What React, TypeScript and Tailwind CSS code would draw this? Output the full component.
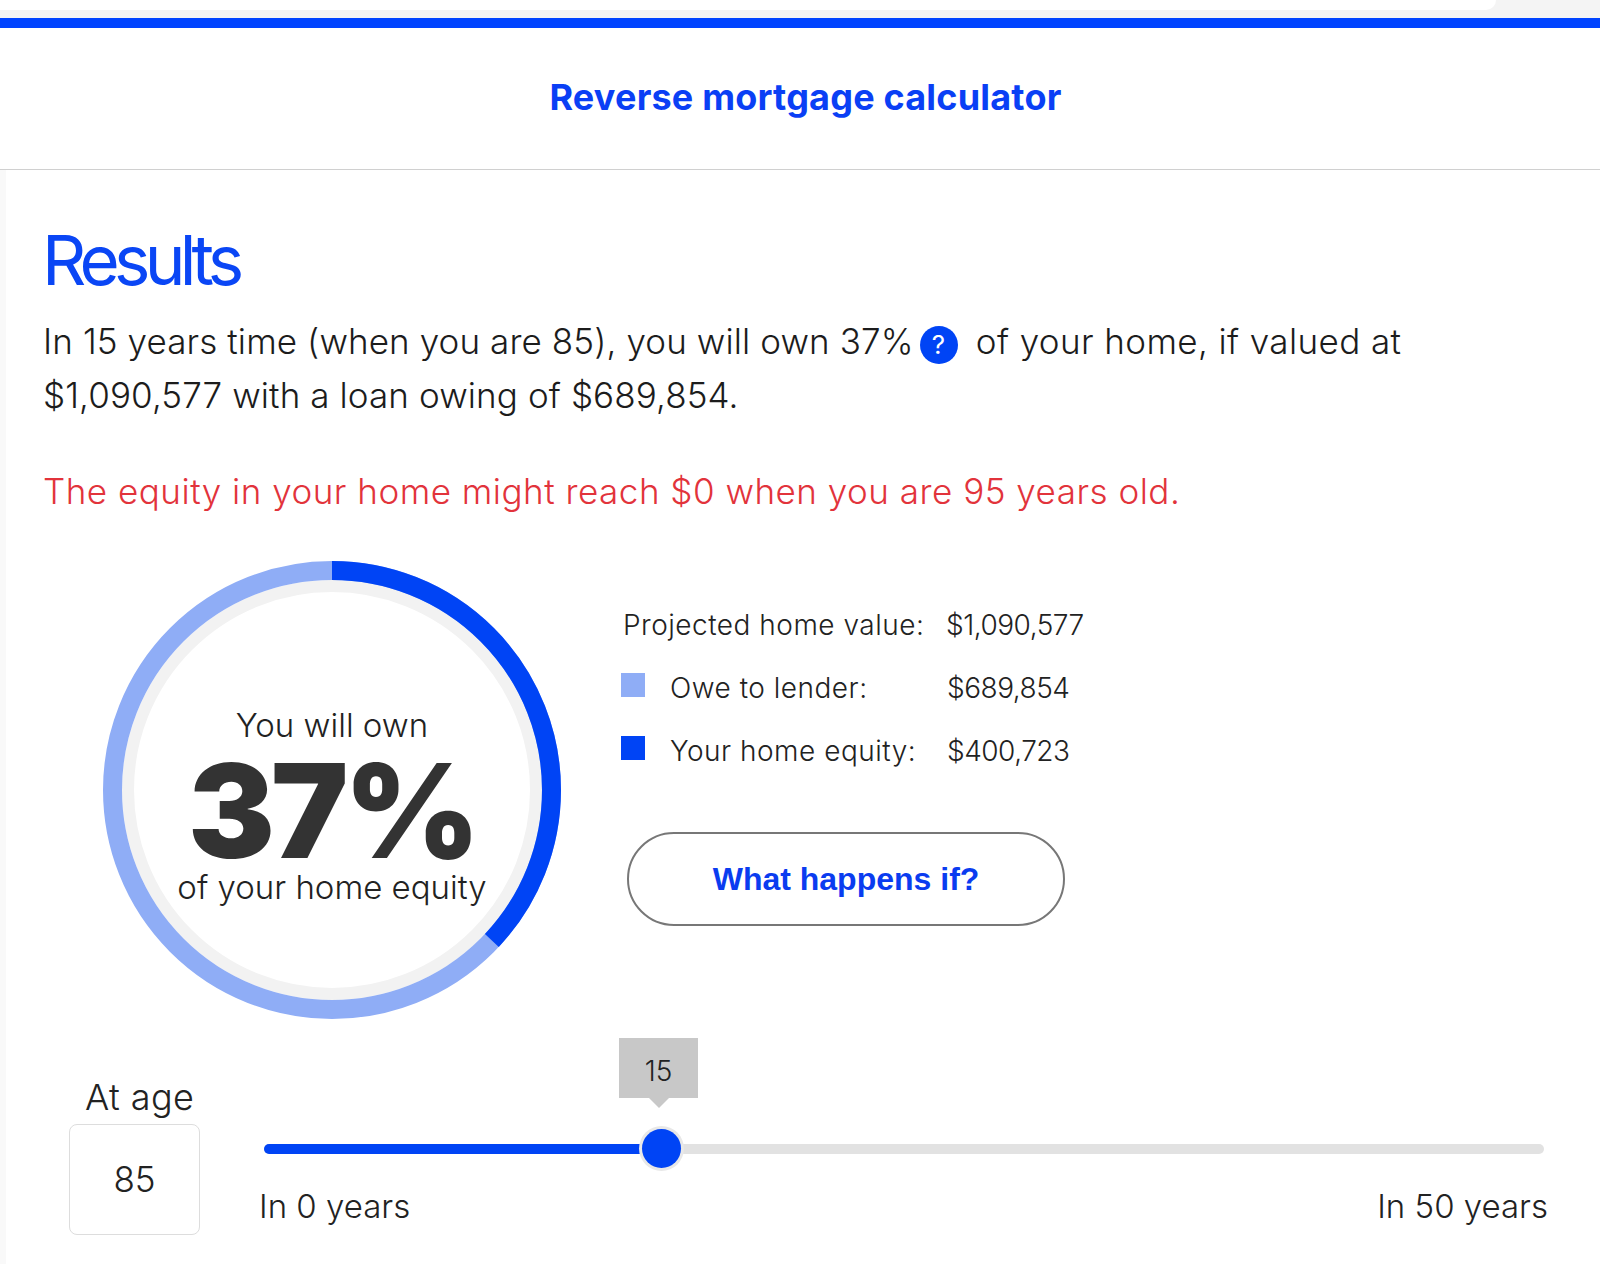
const sans = "font-['Inter','Liberation_Sans',sans-serif]";

function Donut() {
  // 37% equity arc, r is the middle of the 19px stroke
  const r = 219.5;
  const c = 2 * Math.PI * r;
  return (
    <svg width="458" height="458" viewBox="0 0 458 458" className="absolute inset-0" aria-hidden>
      <circle cx="229" cy="229" r="204" fill="none" stroke="#f2f2f2" strokeWidth="12" />
      <circle cx="229" cy="229" r={r} fill="none" stroke="#8fadf6" strokeWidth="19" />
      <circle
        cx="229"
        cy="229"
        r={r}
        fill="none"
        stroke="#0044f5"
        strokeWidth="19"
        strokeDasharray={`${c * 0.37} ${c}`}
        transform="rotate(-90 229 229)"
      />
    </svg>
  );
}

function LegendRow({ swatch, label, value }: { swatch: string; label: string; value: string }) {
  return (
    <div className="flex h-[63px] items-center">
      <span className={`mb-[5px] h-6 w-6 ${swatch}`} />
      <span className="ml-[25px] w-[277px] text-[28px] font-light tracking-[0.5px] text-[#222]">{label}</span>
      <span className="text-[28px] font-light tracking-[-0.5px] text-[#222]">{value}</span>
    </div>
  );
}

export default function App() {
  return (
    <div className={`min-h-[1264px] w-[1600px] overflow-hidden bg-white ${sans}`}>
      <div className="h-[18px] bg-[#f4f4f4]">
        <div className="h-[10px] w-[1496px] rounded-br-[16px] bg-white" />
      </div>
      <div className="h-[10px] bg-[#0044ff]" />
      <header className="flex h-[142px] items-center justify-center border-b border-[#d0d0d0] pb-[4px] pl-[11px]">
        <h2 className="text-[36px] font-bold tracking-[0.2px] text-[#0a3ff5]">Reverse mortgage calculator</h2>
      </header>

      <main className="min-h-[1094px] border-l-[6px] border-[#f9f9f9] pt-[48px] pl-[37px]">
        <h1 className="-ml-[1px] text-[69px] leading-[84px] font-normal tracking-[-5.8px] text-[#0a46f5]">Results</h1>
        <p className="mt-[12px] w-[1500px] text-[35px] leading-[54px] font-light tracking-[0.1px] text-[#1c1c1c]">
          In 15 years time (when you are 85), you will own 37%
          <span className="mr-[8px] ml-[6px] inline-flex h-[38px] w-[38px] items-center justify-center rounded-full bg-[#0044f5] text-[26px] font-normal text-white">
            ?
          </span>
          <span className="tracking-[0.4px]"> of your home, if valued at</span>
          <br />
          $1,090,577 with a loan owing of $689,854.
        </p>
        <p className="mt-[42px] text-[35px] leading-[54px] font-light tracking-[0.5px] text-[#e2333b]">
          The equity in your home might reach $0 when you are 95 years old.
        </p>

        <div className="mt-[43px] flex">
          <div className="relative ml-[60px] h-[458px] w-[458px]">
            <Donut />
            <div className="absolute inset-0 flex flex-col items-center text-[#222]">
              <span className="mt-[144px] text-[33px] leading-10 font-light">You will own</span>
              <span className="mt-[7px] text-[130px] leading-[118px] font-black tracking-[-4px] text-[#333]">37%</span>
              <span className="mt-[-3px] text-[33px] leading-10 font-light">of your home equity</span>
            </div>
          </div>
          <div className="ml-[60px]">
            <div className="mt-[32px] flex h-[63px] items-center">
              <span className="w-[325px] pl-[2px] text-[28px] font-light tracking-[0.5px] text-[#222]">Projected home value:</span>
              <span className="text-[28px] font-light tracking-[-0.5px] text-[#222]">$1,090,577</span>
            </div>
            <LegendRow swatch="bg-[#8fadf6]" label="Owe to lender:" value="$689,854" />
            <LegendRow swatch="bg-[#0044f5]" label="Your home equity:" value="$400,723" />
            <button className="mt-[50px] ml-[6px] h-[94px] w-[438px] rounded-full border-2 border-[#777] font-['Liberation_Sans',sans-serif] text-[32px] font-bold text-[#0a3cf0]">
              What happens if?
            </button>
          </div>
        </div>

        <div className="mt-[19px] flex">
          <div className="ml-[26px] w-[131px]">
            <div className="mt-[35px] pl-[16px] text-[36px] leading-[48px] font-light tracking-[0.4px] text-[#222]">At age</div>
            <div className="mt-[3px] flex h-[111px] w-[131px] items-center justify-center rounded-lg border border-[#ddd] text-[35px] font-light text-[#222]">
              85
            </div>
          </div>
          <div className="ml-[59px] w-[1289px]">
            <div className="relative mt-[106px] ml-[5px] flex h-[10px] w-[1280px] rounded-full bg-[#e2e2e2]">
              <div className="h-full w-[396px] rounded-l-full bg-[#0044f5]" />
              <div className="absolute top-[-15px] left-[378px] h-[39px] w-[39px] rounded-full bg-[#0044f5] ring-[3px] ring-[#e8e8e8]" />
              <div className="absolute top-[-106px] left-[355px] flex h-[60px] w-[79px] items-center justify-center bg-[#c8c8c8] pt-[5px] text-[28px] font-light text-[#222]">
                15
                <span className="absolute top-full left-1/2 h-0 w-0 -translate-x-1/2 border-x-[10px] border-t-[10px] border-x-transparent border-t-[#c8c8c8]" />
              </div>
            </div>
            <div className="mt-[32px] flex justify-between text-[33px] leading-10 font-light text-[#222]">
              <span>In 0 years</span>
              <span>In 50 years</span>
            </div>
          </div>
        </div>
      </main>
    </div>
  );
}
